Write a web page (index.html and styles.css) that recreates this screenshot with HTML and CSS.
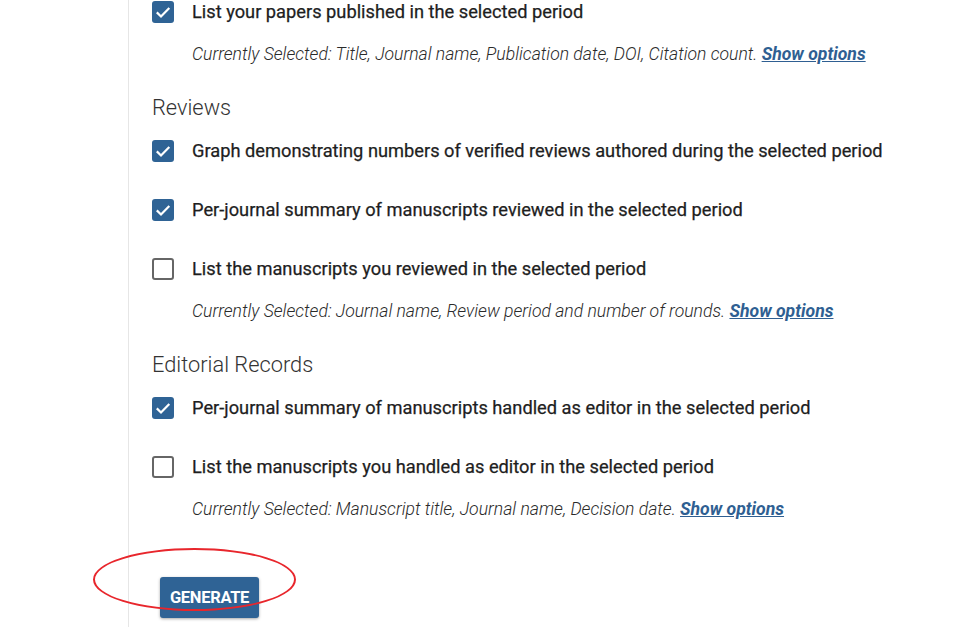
FILE: index.html
```html
<!DOCTYPE html>
<html lang="en">
<head>
<meta charset="utf-8">
<title>Report options</title>
<link rel="stylesheet" href="styles.css">
</head>
<body>
<div class="page">
  <div class="card">
    <div class="option">
      <span class="box checked"><svg viewBox="0 0 22 22" width="22" height="22"><path d="M4.8 11.4L9 15.5 17.3 6.9" fill="none" stroke="#fff" stroke-width="2.2"/></svg></span>
      <span class="label">List your papers published in the selected period</span>
    </div>
    <p class="note">Currently Selected: Title, Journal name, Publication date, DOI, Citation count. <a href="#" class="link">Show options</a></p>

    <h2 class="heading">Reviews</h2>
    <div class="option">
      <span class="box checked"><svg viewBox="0 0 22 22" width="22" height="22"><path d="M4.8 11.4L9 15.5 17.3 6.9" fill="none" stroke="#fff" stroke-width="2.2"/></svg></span>
      <span class="label">Graph demonstrating numbers of verified reviews authored during the selected period</span>
    </div>
    <div class="option spaced">
      <span class="box checked"><svg viewBox="0 0 22 22" width="22" height="22"><path d="M4.8 11.4L9 15.5 17.3 6.9" fill="none" stroke="#fff" stroke-width="2.2"/></svg></span>
      <span class="label">Per-journal summary of manuscripts reviewed in the selected period</span>
    </div>
    <div class="option spaced">
      <span class="box"></span>
      <span class="label">List the manuscripts you reviewed in the selected period</span>
    </div>
    <p class="note">Currently Selected: Journal name, Review period and number of rounds. <a href="#" class="link">Show options</a></p>

    <h2 class="heading">Editorial Records</h2>
    <div class="option">
      <span class="box checked"><svg viewBox="0 0 22 22" width="22" height="22"><path d="M4.8 11.4L9 15.5 17.3 6.9" fill="none" stroke="#fff" stroke-width="2.2"/></svg></span>
      <span class="label">Per-journal summary of manuscripts handled as editor in the selected period</span>
    </div>
    <div class="option spaced">
      <span class="box"></span>
      <span class="label">List the manuscripts you handled as editor in the selected period</span>
    </div>
    <p class="note">Currently Selected: Manuscript title, Journal name, Decision date. <a href="#" class="link">Show options</a></p>

    <div class="actions">
      <button class="btn" type="button">GENERATE</button>
      <span class="ring"></span>
    </div>
  </div>
</div>
</body>
</html>
```

FILE: styles.css
```css
html, body {
  margin: 0;
  padding: 0;
  background: #ffffff;
  height: 100%;
  overflow: hidden;
}
body {
  font-family: Roboto, "Liberation Sans", sans-serif;
  color: #222;
}
.page {
  padding-left: 128px;
  height: 100%;
}
.card {
  border-left: 1px solid #e6e6e6;
  padding-left: 23px;
  padding-top: 1px;
  height: 100%;
  box-sizing: border-box;
}
.option {
  display: flex;
  align-items: center;
  gap: 18px;
  height: 22px;
}
.option.spaced {
  margin-top: 37px;
}
.box {
  width: 22px;
  height: 22px;
  flex: 0 0 22px;
  box-sizing: border-box;
  border: 2px solid #666;
  border-radius: 3px;
  background: #fff;
  display: flex;
}
.box.checked {
  border: none;
  background: #2f6395;
}
.label {
  font-size: 18.25px;
  font-weight: 400;
  line-height: 20px;
  color: #1e1e1e;
  white-space: nowrap;
  -webkit-text-stroke: 0.25px #1e1e1e;
}
.note {
  margin: 20px 0 0 40px;
  line-height: 22px;
  font-size: 17.6px;
  font-style: italic;
  font-weight: 300;
  color: #2a2a2a;
  white-space: nowrap;
}
.link {
  color: #2f5f92;
  font-weight: 700;
  text-decoration: underline;
}
.heading {
  margin: 29px 0 18px 0;
  line-height: 28px;
  font-size: 21.8px;
  font-weight: 300;
  color: #333;
}
.actions {
  position: relative;
  margin-top: 57px;
  padding-left: 8px;
}
.btn {
  width: 99px;
  height: 41px;
  border: none;
  border-radius: 3px;
  background: #2f6395;
  color: #fff;
  font-family: Roboto, "Liberation Sans", sans-serif;
  font-size: 16.5px;
  font-weight: 700;
  letter-spacing: -0.3px;
  box-shadow: 0 1px 3px rgba(0, 0, 0, 0.35);
  padding: 0;
}
.ring {
  position: absolute;
  left: -59px;
  top: -29px;
  width: 199px;
  height: 59px;
  border: 2px solid #e8262c;
  border-radius: 50%;
  pointer-events: none;
}
```
